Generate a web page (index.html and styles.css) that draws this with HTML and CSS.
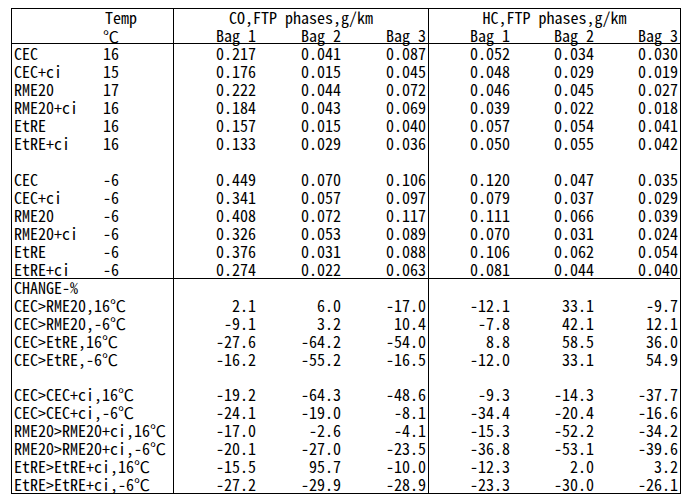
FILE: index.html
```html
<!DOCTYPE html>
<html>
<head>
<meta charset="utf-8">
<link rel="stylesheet" href="styles.css">
</head>
<body>
<div class="sheet">
  <div class="sec head">
    <div class="row h1">
      <div class="lab"></div><div class="tmp t-word">Temp</div>
      <div class="grp co-start">CO,FTP phases,g/km</div>
      <div class="grp hc-start">HC,FTP phases,g/km</div>
    </div>
    <div class="row h2">
      <div class="lab"></div><div class="tmp deg">℃</div>
      <div class="num co-start"><u>Bag 1</u></div><div class="num"><u>Bag 2</u></div><div class="num"><u>Bag 3</u></div>
      <div class="num hc-start"><u>Bag 1</u></div><div class="num"><u>Bag 2</u></div><div class="num"><u>Bag 3</u></div>
    </div>
  </div>
  <div class="sec sec1">
    <div class="row"><div class="lab">CEC</div><div class="tmp">16</div><div class="num co-start">0.217</div><div class="num">0.041</div><div class="num">0.087</div><div class="num hc-start">0.052</div><div class="num">0.034</div><div class="num">0.030</div></div>
    <div class="row"><div class="lab">CEC+ci</div><div class="tmp">15</div><div class="num co-start">0.176</div><div class="num">0.015</div><div class="num">0.045</div><div class="num hc-start">0.048</div><div class="num">0.029</div><div class="num">0.019</div></div>
    <div class="row"><div class="lab">RME20</div><div class="tmp">17</div><div class="num co-start">0.222</div><div class="num">0.044</div><div class="num">0.072</div><div class="num hc-start">0.046</div><div class="num">0.045</div><div class="num">0.027</div></div>
    <div class="row"><div class="lab">RME20+ci</div><div class="tmp">16</div><div class="num co-start">0.184</div><div class="num">0.043</div><div class="num">0.069</div><div class="num hc-start">0.039</div><div class="num">0.022</div><div class="num">0.018</div></div>
    <div class="row"><div class="lab">EtRE</div><div class="tmp">16</div><div class="num co-start">0.157</div><div class="num">0.015</div><div class="num">0.040</div><div class="num hc-start">0.057</div><div class="num">0.054</div><div class="num">0.041</div></div>
    <div class="row"><div class="lab">EtRE+ci</div><div class="tmp">16</div><div class="num co-start">0.133</div><div class="num">0.029</div><div class="num">0.036</div><div class="num hc-start">0.050</div><div class="num">0.055</div><div class="num">0.042</div></div>
    <div class="row"><div class="lab"></div><div class="tmp"></div><div class="num co-start"></div><div class="num"></div><div class="num"></div><div class="num hc-start"></div><div class="num"></div><div class="num"></div></div>
    <div class="row"><div class="lab">CEC</div><div class="tmp">-6</div><div class="num co-start">0.449</div><div class="num">0.070</div><div class="num">0.106</div><div class="num hc-start">0.120</div><div class="num">0.047</div><div class="num">0.035</div></div>
    <div class="row"><div class="lab">CEC+ci</div><div class="tmp">-6</div><div class="num co-start">0.341</div><div class="num">0.057</div><div class="num">0.097</div><div class="num hc-start">0.079</div><div class="num">0.037</div><div class="num">0.029</div></div>
    <div class="row"><div class="lab">RME20</div><div class="tmp">-6</div><div class="num co-start">0.408</div><div class="num">0.072</div><div class="num">0.117</div><div class="num hc-start">0.111</div><div class="num">0.066</div><div class="num">0.039</div></div>
    <div class="row"><div class="lab">RME20+ci</div><div class="tmp">-6</div><div class="num co-start">0.326</div><div class="num">0.053</div><div class="num">0.089</div><div class="num hc-start">0.070</div><div class="num">0.031</div><div class="num">0.024</div></div>
    <div class="row"><div class="lab">EtRE</div><div class="tmp">-6</div><div class="num co-start">0.376</div><div class="num">0.031</div><div class="num">0.088</div><div class="num hc-start">0.106</div><div class="num">0.062</div><div class="num">0.054</div></div>
    <div class="row"><div class="lab">EtRE+ci</div><div class="tmp">-6</div><div class="num co-start">0.274</div><div class="num">0.022</div><div class="num">0.063</div><div class="num hc-start">0.081</div><div class="num">0.044</div><div class="num">0.040</div></div>
  </div>
  <div class="sec sec2">
    <div class="row short"><div class="wide">CHANGE-%</div><div class="num co-start"></div><div class="num"></div><div class="num"></div><div class="num hc-start"></div><div class="num"></div><div class="num"></div></div>
    <div class="row"><div class="wide">CEC&gt;RME20,16℃</div><div class="num co-start">2.1</div><div class="num">6.0</div><div class="num">-17.0</div><div class="num hc-start">-12.1</div><div class="num">33.1</div><div class="num">-9.7</div></div>
    <div class="row"><div class="wide">CEC&gt;RME20,-6℃</div><div class="num co-start">-9.1</div><div class="num">3.2</div><div class="num">10.4</div><div class="num hc-start">-7.8</div><div class="num">42.1</div><div class="num">12.1</div></div>
    <div class="row"><div class="wide">CEC&gt;EtRE,16℃</div><div class="num co-start">-27.6</div><div class="num">-64.2</div><div class="num">-54.0</div><div class="num hc-start">8.8</div><div class="num">58.5</div><div class="num">36.0</div></div>
    <div class="row"><div class="wide">CEC&gt;EtRE,-6℃</div><div class="num co-start">-16.2</div><div class="num">-55.2</div><div class="num">-16.5</div><div class="num hc-start">-12.0</div><div class="num">33.1</div><div class="num">54.9</div></div>
    <div class="row short"><div class="wide"></div><div class="num co-start"></div><div class="num"></div><div class="num"></div><div class="num hc-start"></div><div class="num"></div><div class="num"></div></div>
    <div class="row"><div class="wide">CEC&gt;CEC+ci,16℃</div><div class="num co-start">-19.2</div><div class="num">-64.3</div><div class="num">-48.6</div><div class="num hc-start">-9.3</div><div class="num">-14.3</div><div class="num">-37.7</div></div>
    <div class="row"><div class="wide">CEC&gt;CEC+ci,-6℃</div><div class="num co-start">-24.1</div><div class="num">-19.0</div><div class="num">-8.1</div><div class="num hc-start">-34.4</div><div class="num">-20.4</div><div class="num">-16.6</div></div>
    <div class="row"><div class="wide">RME20&gt;RME20+ci,16℃</div><div class="num co-start">-17.0</div><div class="num">-2.6</div><div class="num">-4.1</div><div class="num hc-start">-15.3</div><div class="num">-52.2</div><div class="num">-34.2</div></div>
    <div class="row"><div class="wide">RME20&gt;RME20+ci,-6℃</div><div class="num co-start">-20.1</div><div class="num">-27.0</div><div class="num">-23.5</div><div class="num hc-start">-36.8</div><div class="num">-53.1</div><div class="num">-39.6</div></div>
    <div class="row"><div class="wide">EtRE&gt;EtRE+ci,16℃</div><div class="num co-start">-15.5</div><div class="num">95.7</div><div class="num">-10.0</div><div class="num hc-start">-12.3</div><div class="num">2.0</div><div class="num">3.2</div></div>
    <div class="row"><div class="wide">EtRE&gt;EtRE+ci,-6℃</div><div class="num co-start">-27.2</div><div class="num">-29.9</div><div class="num">-28.9</div><div class="num hc-start">-23.3</div><div class="num">-30.0</div><div class="num">-26.1</div></div>
  </div>
</div>
</body>
</html>
```

FILE: styles.css
```css
html, body {
  margin: 0;
  padding: 0;
  background: #fff;
}
body {
  padding: 8px 0 0 11px;
  color: #000;
  font-family: "Noto Sans Mono CJK JP", "Noto Sans CJK JP", monospace;
  font-feature-settings: "hwid" 1;
  font-size: 16px;
}
.sheet {
  box-sizing: border-box;
  width: 670px;
  border: 1px solid #000;
}
.sec { display: block; }
.head, .sec1 { border-bottom: 1px solid #000; }
.row {
  display: grid;
  grid-template-columns: 90px 71px 85px 85px 85px 84px 84px 84px;
  height: 18px;
  line-height: 18px;
}
.row.short { height: 17px; line-height: 17px; }
.head .row { height: 17px; line-height: 17px; }
.row > div {
  box-sizing: border-box;
  white-space: nowrap;
  overflow: visible;
  min-width: 0;
}
.lab { padding-left: 2px; }
.tmp { padding-left: 1px; }
.t-word { padding-left: 3px; }
.wide { grid-column: span 2; padding-left: 2px; }
.num { text-align: right; padding-right: 2px; }
.grp { grid-column: span 3; text-align: center; }
.co-start, .hc-start { border-left: 1px solid #000; }
.head .h2 .num { line-height: 18px; }
.head .h2 .deg { line-height: 21px; }
u { text-decoration: underline; text-underline-offset: 1px; }
```
